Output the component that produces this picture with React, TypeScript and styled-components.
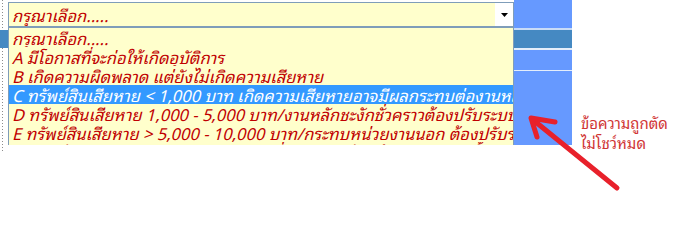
import styled, { createGlobalStyle } from "styled-components";

const GlobalStyle = createGlobalStyle`
  html, body {
    margin: 0;
    padding: 0;
    background: #ffffff;
  }
  body {
    font-family: Tahoma, "Noto Sans Thai", "Noto Sans", "DejaVu Sans", sans-serif;
  }
`;

const thaiFont = `Tahoma, "Noto Sans Thai Looped", "Noto Sans Thai", Loma, Garuda, "Noto Sans", "DejaVu Sans", sans-serif`;

const Page = styled.div`
  position: relative;
  display: flex;
  align-items: flex-start;
  width: 685px;
  height: 229px;
  overflow: hidden;
`;

const Gutter = styled.div`
  width: 8px;
  height: 153px;
  padding-top: 30px;
  box-sizing: border-box;
  background: repeating-linear-gradient(to bottom, #8c8c8c 0 1px, transparent 1px 3px) 2px 0 / 1px 100% no-repeat;
`;

const GutterTab = styled.div`
  width: 8px;
  height: 18px;
  background: #4589c2;
`;

const Combo = styled.div`
  width: 506px;
  display: flex;
  flex-direction: column;
  padding-top: 2px;
`;

const SelectBox = styled.div`
  height: 25px;
  box-sizing: border-box;
  display: flex;
  border: 1px solid #7f9db9;
  background: #ffffcc;
`;

const SelectText = styled.div`
  flex: 1;
  padding-left: 3px;
  font-family: ${thaiFont};
  font-size: 16.5px;
  font-style: italic;
  line-height: 23px;
  color: #c00000;
  white-space: nowrap;
  overflow: hidden;
`;

const ArrowButton = styled.div`
  width: 18px;
  display: flex;
  align-items: center;
  justify-content: center;
  background: #ffffff;
`;

const List = styled.div`
  height: 118px;
  box-sizing: border-box;
  border: 1px solid #7f9db9;
  border-bottom: none;
  background: #ffffcc;
  overflow: hidden;
`;

const Option = styled.div<{ $selected?: boolean }>`
  height: 19px;
  padding-left: 3px;
  font-family: ${thaiFont};
  font-size: 16.5px;
  font-style: italic;
  line-height: 19px;
  white-space: nowrap;
  overflow: hidden;
  color: ${({ $selected }) => ($selected ? "#ffffff" : "#c00000")};
  background: ${({ $selected }) => ($selected ? "#3399ff" : "transparent")};
`;

const SideColumn = styled.div`
  width: 58px;
  height: 145px;
  display: flex;
  flex-direction: column;
  background: #6699ff;
`;

const SideCell = styled.div<{ $h: number; $bg: string }>`
  height: ${({ $h }) => $h}px;
  flex-shrink: 0;
  background: ${({ $bg }) => $bg};
`;

const Note = styled.div`
  margin-left: 9px;
  padding-top: 112px;
  font-family: ${thaiFont};
  font-size: 15px;
  line-height: 20px;
  color: #d03434;
`;

const ArrowOverlay = styled.svg`
  position: absolute;
  left: 0;
  top: 0;
  pointer-events: none;
`;

const options = [
  "กรุณาเลือก.....",
  "A มีโอกาสที่จะก่อให้เกิดอุบัติการ",
  "B เกิดความผิดพลาด แต่ยังไม่เกิดความเสียหาย",
  "C ทรัพย์สินเสียหาย < 1,000 บาท เกิดความเสียหายอาจมีผลกระทบต่องานหลัก",
  "D ทรัพย์สินเสียหาย 1,000 - 5,000 บาท/งานหลักชะงักชั่วคราวต้องปรับระบบงาน",
  "E ทรัพย์สินเสียหาย > 5,000 - 10,000 บาท/กระทบหน่วยงานนอก ต้องปรับระบบ",
  "F ทรัพย์สินเสียหาย > 10,000 บาท/เสียชื่อเสียงองค์กร ต้องปรับระบบทั้งหมด",
];

const sideCells = [
  { h: 28, bg: "#6699ff" },
  { h: 2, bg: "#c9dcf7" },
  { h: 18, bg: "#4589c2" },
  { h: 2, bg: "#e4eefb" },
  { h: 20, bg: "#6699ff" },
  { h: 1, bg: "#e4eefb" },
];

export default function App() {
  return (
    <Page>
      <GlobalStyle />
      <Gutter>
        <GutterTab />
      </Gutter>
      <Combo>
        <SelectBox>
          <SelectText>กรุณาเลือก.....</SelectText>
          <ArrowButton>
            <svg width="7" height="4" viewBox="0 0 7 4">
              <path d="M0 0h7L3.5 4z" fill="#000" />
            </svg>
          </ArrowButton>
        </SelectBox>
        <List>
          {options.map((o, i) => (
            <Option key={i} $selected={i === 3}>
              {o}
            </Option>
          ))}
        </List>
      </Combo>
      <SideColumn>
        {sideCells.map((c, i) => (
          <SideCell key={i} $h={c.h} $bg={c.bg} />
        ))}
      </SideColumn>
      <Note>
        ข้อความถูกตัด
        <br />
        ไม่โชว์หมด
      </Note>
      <ArrowOverlay width="685" height="229" viewBox="0 0 685 229">
        <g stroke="#e8212b" strokeWidth="5" strokeLinecap="round" strokeLinejoin="round" fill="none">
          <line x1="617" y1="188" x2="532" y2="119" />
          <polyline points="555,122 531,118 537,137" />
        </g>
      </ArrowOverlay>
    </Page>
  );
}
